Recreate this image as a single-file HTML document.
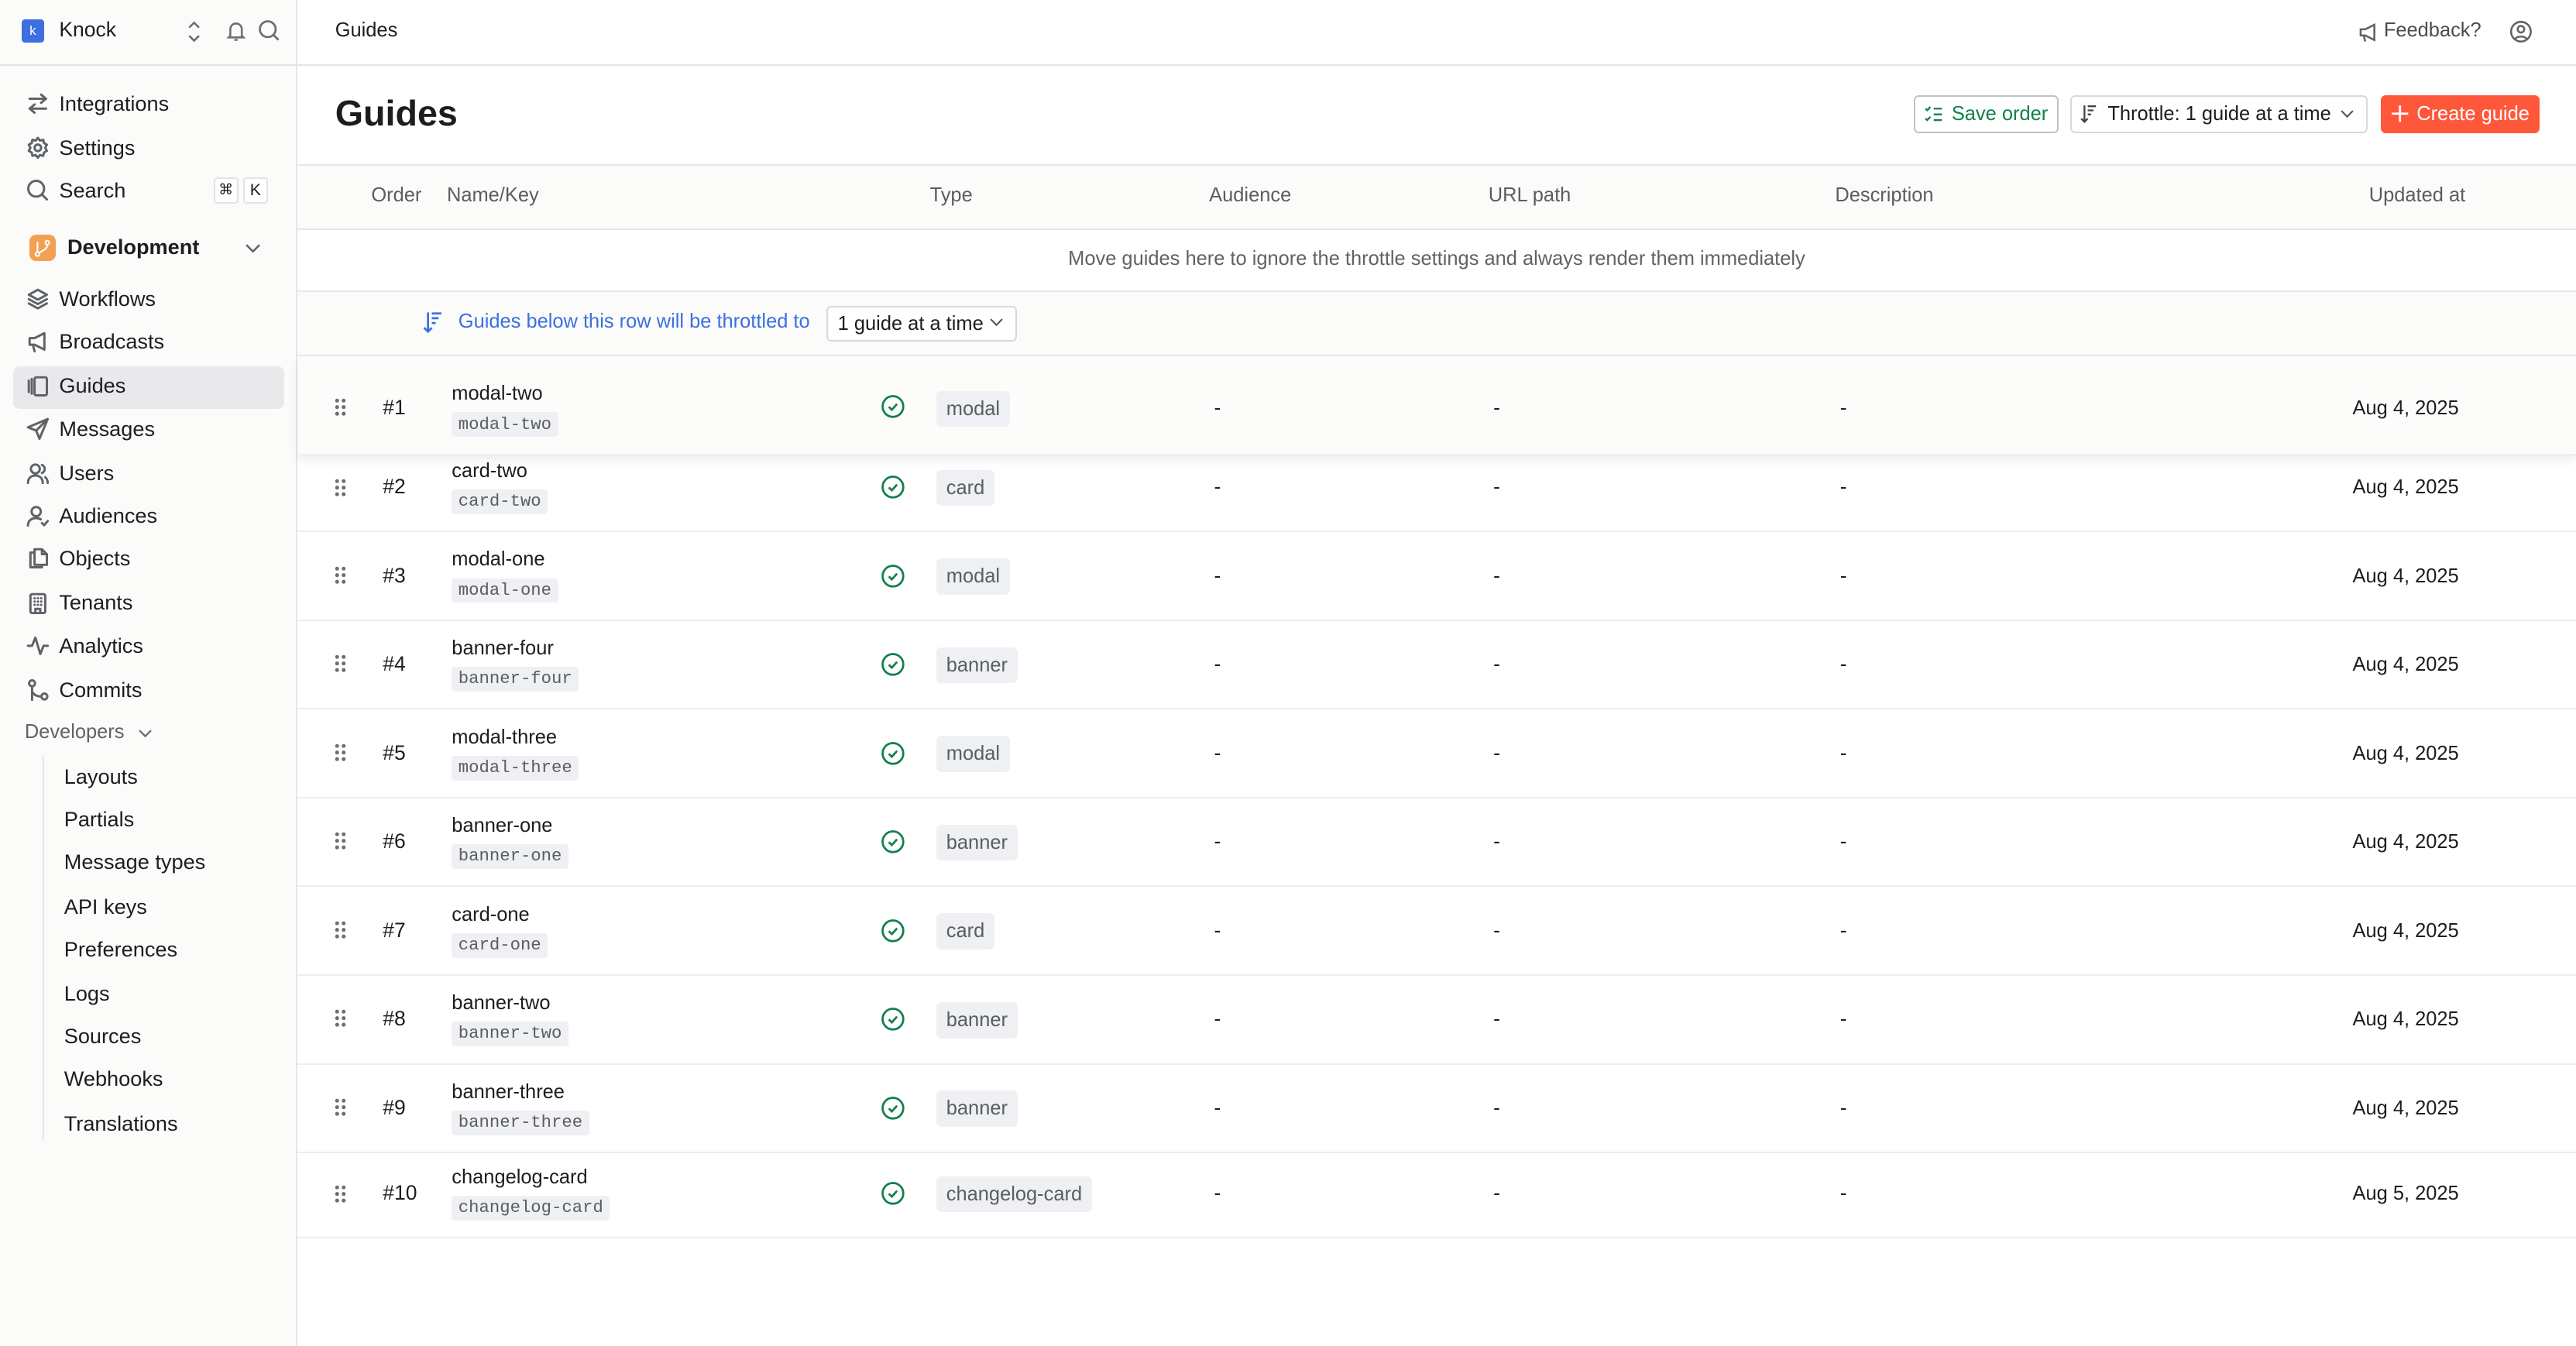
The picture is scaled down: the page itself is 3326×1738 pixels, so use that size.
<!DOCTYPE html>
<html><head><meta charset="utf-8">
<style>
*{box-sizing:border-box;margin:0;padding:0}
html,body{width:3326px;height:1738px;overflow:hidden;background:#fff}
#app{zoom:2.12117;width:1568px;height:819.4px;position:relative;font-family:"Liberation Sans",sans-serif;color:#1c1d20;font-size:12.5px}
.abs{position:absolute}
#side{left:0;top:0;width:181px;height:100%;background:#fbfbfa;border-right:1px solid #e6e6e8}
#top{left:0;top:0;width:1568px;height:40px;border-bottom:1px solid #e4e4e6}
.ni{position:absolute;left:16px;height:20px;display:flex;align-items:center;font-size:12.8px;color:#1c1d20}
.ni svg{width:14px;height:14px;margin-right:6px;stroke:#5f6368;fill:none;stroke-width:1.4;stroke-linecap:round;stroke-linejoin:round}
.sub{position:absolute;left:39px;font-size:12.8px;height:20px;line-height:20px}
.hdr{font-size:12px;color:#5a5d63;position:absolute;top:112px}
.row{position:absolute;left:181px;width:1387px;border-bottom:1px solid #eeeef1}
.row>*{position:absolute}
.dots{left:22px;width:8px;height:12px}
.num{left:52px;font-size:12.5px}
.nm{left:94px;font-size:12px}
.code{left:94px;font-family:"Liberation Mono",monospace;font-size:10.5px;background:#eff0f3;color:#5a5d63;padding:1px 4px;border-radius:2px;height:15px;line-height:13px}
.chk{left:355px;width:15px;height:15px}
.badge{left:389px;background:#eff0f3;color:#5a5d63;border-radius:3px;height:22px;line-height:22px;padding:0 6px;font-size:12px}
.dash{font-size:12.5px}
.dt{left:1251px;font-size:12px}
</style></head><body><div id="app">
<div id="side" class="abs">
  <div class="abs" style="left:13px;top:12px;width:14px;height:14px;background:#3e6fe0;border-radius:2px;color:#fff;font-size:8px;text-align:center;line-height:14px">k</div>
  <div class="abs" style="left:36px;top:11px;font-size:12.5px;font-weight:500">Knock</div>
  <svg class="abs" style="left:113px;top:12px" width="10" height="15" viewBox="0 0 10 15" fill="none" stroke="#6b6e74" stroke-width="1.2"><path d="M2 5l3-3 3 3M2 10l3 3 3-3"/></svg>
  <svg class="abs" style="left:137px;top:12px" width="13" height="14" viewBox="0 0 13 14" fill="none" stroke="#6b6e74" stroke-width="1.2"><path d="M3 10V6a3.5 3.5 0 017 0v4l1 1H2zM5.5 12.5h2"/></svg>
  <svg class="abs" style="left:157px;top:12px" width="14" height="14" viewBox="0 0 14 14" fill="none" stroke="#6b6e74" stroke-width="1.3"><circle cx="6" cy="6" r="4.8"/><path d="M9.5 9.5l3 3"/></svg>
  <div class="ni" style="top:53px"><svg viewBox="0 0 14 14"><path d="M2 4h10M9 1.5L12 4 9 6.5M12 10H2M5 7.5L2 10l3 2.5"/></svg>Integrations</div>
  <div class="ni" style="top:80px"><svg viewBox="0 0 14 14"><circle cx="7" cy="7" r="2"/><path d="M7 1l1.3 1.6 2-.5.4 2 1.8 1L11.5 7l1 1.9-1.8 1-.4 2-2-.5L7 13l-1.3-1.6-2 .5-.4-2-1.8-1L2.5 7l-1-1.9 1.8-1 .4-2 2 .5z"/></svg>Settings</div>
  <div class="ni" style="top:106px"><svg viewBox="0 0 14 14"><circle cx="6" cy="6" r="4.8"/><path d="M9.5 9.5l3 3"/></svg>Search</div>
  <div class="abs" style="left:130px;top:108px;width:15px;height:16px;border:1px solid #e3e3e5;border-radius:2px;background:#fff;font-size:9px;text-align:center;line-height:14px">⌘</div>
  <div class="abs" style="left:148px;top:108px;width:15px;height:16px;border:1px solid #e3e3e5;border-radius:2px;background:#fff;font-size:10px;text-align:center;line-height:14px">K</div>
  <div class="abs" style="left:18px;top:143px;width:16px;height:16px;background:#f2a152;border-radius:4px"></div>
  <svg class="abs" style="left:20px;top:145px" width="12" height="12" viewBox="0 0 12 12" fill="none" stroke="#fff" stroke-width="1"><circle cx="3" cy="9.5" r="1.2"/><circle cx="9" cy="2.5" r="1.2"/><path d="M3 2v6.3M9 3.7c0 3-3 3.5-5 5"/></svg>
  <div class="abs" style="left:41px;top:143px;font-size:12.8px;font-weight:600">Development</div>
  <svg class="abs" style="left:149px;top:147px" width="10" height="8" viewBox="0 0 10 8" fill="none" stroke="#5f6368" stroke-width="1.2"><path d="M1 2l4 4 4-4"/></svg>
  <div class="ni" style="top:172px"><svg viewBox="0 0 14 14"><path d="M7 1.5l5.5 3L7 7.5l-5.5-3zM1.5 7.2L7 10.2l5.5-3M1.5 9.8L7 12.8l5.5-3"/></svg>Workflows</div>
  <div class="ni" style="top:198px"><svg viewBox="0 0 14 14"><path d="M2 5h3l6-3v10L5 9H2zM4 9l1 4"/></svg>Broadcasts</div>
  <div class="abs" style="left:8px;top:223px;width:165px;height:26px;background:#e9e9eb;border-radius:4px"></div>
  <div class="ni" style="top:225px"><svg viewBox="0 0 14 14"><rect x="5" y="1.5" width="7.5" height="11" rx="1"/><path d="M1.5 3.5v7M3.3 2.5v9"/></svg>Guides</div>
  <div class="ni" style="top:251px"><svg viewBox="0 0 14 14"><path d="M13 1L1 6l5 2 2 5zM6 8l7-7"/></svg>Messages</div>
  <div class="ni" style="top:278px"><svg viewBox="0 0 14 14"><circle cx="5.5" cy="4.5" r="2.7"/><path d="M1 13c0-3 2-4.5 4.5-4.5S10 10 10 13M9.5 2a2.7 2.7 0 010 5M11.5 9.5c1 .8 1.5 2 1.5 3.5"/></svg>Users</div>
  <div class="ni" style="top:304px"><svg viewBox="0 0 14 14"><circle cx="6" cy="4.5" r="2.8"/><path d="M1 13c0-3 2.2-4.5 5-4.5 1 0 2 .2 2.8.7M9.5 11.5l1.3 1.3 2.2-2.5"/></svg>Audiences</div>
  <div class="ni" style="top:330px"><svg viewBox="0 0 14 14"><path d="M5 3.5H2.5v9h7V11M5 1.5h4.5l3 3V11H5zM9.5 1.5v3h3"/></svg>Objects</div>
  <div class="ni" style="top:357px"><svg viewBox="0 0 14 14"><rect x="2.5" y="1.5" width="9" height="11.5" rx="1"/><path d="M5 4h.1M7 4h.1M9 4h.1M5 6h.1M7 6h.1M9 6h.1M5 8h.1M7 8h.1M9 8h.1M5.5 13v-2.5h3V13"/></svg>Tenants</div>
  <div class="ni" style="top:383px"><svg viewBox="0 0 14 14"><path d="M1 7h2.5l2-5 3 10 2-5H13"/></svg>Analytics</div>
  <div class="ni" style="top:410px"><svg viewBox="0 0 14 14"><circle cx="3.5" cy="3" r="1.8"/><circle cx="11" cy="11" r="1.8"/><path d="M3.5 5v8M3.5 8c1 2 3 3 5.7 3"/></svg>Commits</div>
  <div class="abs" style="left:15px;top:439px;font-size:12px;color:#5f6368">Developers</div>
  <svg class="abs" style="left:84px;top:443px" width="9" height="7" viewBox="0 0 9 7" fill="none" stroke="#6b6e74" stroke-width="1.1"><path d="M1 1.5l3.5 3.5 3.5-3.5"/></svg>
  <div class="abs" style="left:26px;top:460px;width:1px;height:234px;background:#e4e4e6"></div>
  <div class="sub" style="top:463px">Layouts</div>
  <div class="sub" style="top:489px">Partials</div>
  <div class="sub" style="top:515px">Message types</div>
  <div class="sub" style="top:542px">API keys</div>
  <div class="sub" style="top:568px">Preferences</div>
  <div class="sub" style="top:595px">Logs</div>
  <div class="sub" style="top:621px">Sources</div>
  <div class="sub" style="top:647px">Webhooks</div>
  <div class="sub" style="top:674px">Translations</div>
</div>
<div id="top" class="abs" style="left:181px;width:1387px"></div>
<div class="abs" style="left:0;top:39px;width:181px;height:1px;background:#e4e4e6"></div>
<div class="abs" style="left:204px;top:12px;font-size:12px">Guides</div>
<svg class="abs" style="left:1435px;top:13px" width="13" height="13" viewBox="0 0 14 14" fill="none" stroke="#5f6368" stroke-width="1.3"><path d="M2 5h3l6-3v10L5 9H2zM4 9l1 4"/></svg>
<div class="abs" style="left:1451px;top:12px;font-size:12px;color:#4a4d52">Feedback?</div>
<svg class="abs" style="left:1527px;top:12px" width="15" height="15" viewBox="0 0 15 15" fill="none" stroke="#5f6368" stroke-width="1.2"><circle cx="7.5" cy="7.5" r="6"/><circle cx="7.5" cy="6" r="2"/><path d="M4 12c1-2 6-2 7 0"/></svg>

<div class="abs" style="left:204px;top:56px;font-size:22px;font-weight:700;color:#1c1d20">Guides</div>
<div class="abs" style="left:1165px;top:58px;width:88px;height:23px;border:1px solid #b8c6c3;border-radius:3px;font-size:12px;color:#13804b;line-height:21px;padding-left:22px">Save order</div>
<svg class="abs" style="left:1171px;top:64px" width="12" height="11" viewBox="0 0 12 11" fill="none" stroke="#13804b" stroke-width="1.1"><path d="M1 2l1 1 2-2M1 8l1 1 2-2M6 2h5M6 5.5h5M6 9h5"/></svg>
<div class="abs" style="left:1260px;top:58px;width:181px;height:23px;border:1px solid #d9d9dc;border-radius:3px;font-size:12px;line-height:21px;padding-left:22px">Throttle: 1 guide at a time</div>
<svg class="abs" style="left:1266px;top:63px" width="11" height="12" viewBox="0 0 11 12" fill="none" stroke="#444" stroke-width="1.1"><path d="M3 1v10M1 9l2 2 2-2M5 1.5h5M5 4h3.5M5 6.5h2"/></svg>
<svg class="abs" style="left:1424px;top:66px" width="9" height="7" viewBox="0 0 9 7" fill="none" stroke="#555" stroke-width="1"><path d="M1 1.5l3.5 3.5 3.5-3.5"/></svg>
<div class="abs" style="left:1449px;top:58px;width:97px;height:23px;background:#ff573a;border-radius:3px;font-size:12px;color:#fff;line-height:23px;padding-left:22px">Create guide</div>
<svg class="abs" style="left:1455px;top:63px" width="12" height="12" viewBox="0 0 12 12" fill="none" stroke="#fff" stroke-width="1.3"><path d="M6 1v10M1 6h10"/></svg>

<div class="abs" style="left:181px;top:100px;width:1387px;height:40px;background:#fbfbfa;border-top:1px solid #e8e8ea;border-bottom:1px solid #e8e8ea"></div>
<div class="hdr" style="left:226px">Order</div>
<div class="hdr" style="left:272px">Name/Key</div>
<div class="hdr" style="left:566px">Type</div>
<div class="hdr" style="left:736px">Audience</div>
<div class="hdr" style="left:906px">URL path</div>
<div class="hdr" style="left:1117px">Description</div>
<div class="hdr" style="left:1442px">Updated at</div>
<div class="abs" style="left:181px;top:151px;width:1387px;text-align:center;font-size:12px;color:#5f6368">Move guides here to ignore the throttle settings and always render them immediately</div>
<div class="abs" style="left:181px;top:177px;width:1387px;height:40px;background:#fbfbfa;border-top:1px solid #e8e8ea;border-bottom:1px solid #e8e8ea"></div>
<svg class="abs" style="left:257px;top:189px" width="13" height="14" viewBox="0 0 11 12" fill="none" stroke="#3b6fe0" stroke-width="1.1"><path d="M3 1v10M1 9l2 2 2-2M5 1.5h5M5 4h3.5M5 6.5h2"/></svg>
<div class="abs" style="left:279px;top:189px;font-size:12px;color:#3b6fe0">Guides below this row will be throttled to</div>
<div class="abs" style="left:503px;top:186px;width:116px;height:22px;border:1px solid #d9d9dc;border-radius:3px;background:#fff;font-size:12px;line-height:20px;padding-left:6px">1 guide at a time</div>
<svg class="abs" style="left:602px;top:193px" width="9" height="7" viewBox="0 0 9 7" fill="none" stroke="#555" stroke-width="1"><path d="M1 1.5l3.5 3.5 3.5-3.5"/></svg>

<div id="rows"></div>
<svg width="0" height="0" style="position:absolute"><defs>
<g id="dd" fill="#6b6e74"><circle cx="2" cy="2" r="1.2"/><circle cx="6" cy="2" r="1.2"/><circle cx="2" cy="6" r="1.2"/><circle cx="6" cy="6" r="1.2"/><circle cx="2" cy="10" r="1.2"/><circle cx="6" cy="10" r="1.2"/></g>
<g id="ck" fill="none" stroke="#13804b" stroke-width="1.3"><circle cx="7.5" cy="7.5" r="6.3"/><path d="M5 7.7l1.8 1.8L10 6"/></g>
</defs></svg>
<div class="row" style="top:217px;height:60px;background:#fcfcfb;box-shadow:0 3px 5px rgba(0,0,0,.07);z-index:2">
<svg class="dots" style="top:25px" viewBox="0 0 8 12"><use href="#dd"/></svg><div class="num" style="top:24px">#1</div><div class="nm" style="top:16px">modal-two</div><div class="code" style="top:34px">modal-two</div><svg class="chk" style="top:23px" viewBox="0 0 15 15"><use href="#ck"/></svg><div class="badge" style="top:21px">modal</div><div class="dash" style="left:558px;top:24px">-</div><div class="dash" style="left:728px;top:24px">-</div><div class="dash" style="left:939px;top:24px">-</div><div class="dt" style="top:25px">Aug 4, 2025</div></div>
<div class="row" style="top:277px;height:47px">
<svg class="dots" style="top:14px" viewBox="0 0 8 12"><use href="#dd"/></svg><div class="num" style="top:12px">#2</div><div class="nm" style="top:3px">card-two</div><div class="code" style="top:21px">card-two</div><svg class="chk" style="top:12px" viewBox="0 0 15 15"><use href="#ck"/></svg><div class="badge" style="top:9px">card</div><div class="dash" style="left:558px;top:12px">-</div><div class="dash" style="left:728px;top:12px">-</div><div class="dash" style="left:939px;top:12px">-</div><div class="dt" style="top:13px">Aug 4, 2025</div></div>
<div class="row" style="top:324px;height:54px">
<svg class="dots" style="top:20px" viewBox="0 0 8 12"><use href="#dd"/></svg><div class="num" style="top:19px">#3</div><div class="nm" style="top:10px">modal-one</div><div class="code" style="top:28px">modal-one</div><svg class="chk" style="top:19px" viewBox="0 0 15 15"><use href="#ck"/></svg><div class="badge" style="top:16px">modal</div><div class="dash" style="left:558px;top:19px">-</div><div class="dash" style="left:728px;top:19px">-</div><div class="dash" style="left:939px;top:19px">-</div><div class="dt" style="top:20px">Aug 4, 2025</div></div>
<div class="row" style="top:378px;height:54px">
<svg class="dots" style="top:20px" viewBox="0 0 8 12"><use href="#dd"/></svg><div class="num" style="top:19px">#4</div><div class="nm" style="top:10px">banner-four</div><div class="code" style="top:28px">banner-four</div><svg class="chk" style="top:19px" viewBox="0 0 15 15"><use href="#ck"/></svg><div class="badge" style="top:16px">banner</div><div class="dash" style="left:558px;top:19px">-</div><div class="dash" style="left:728px;top:19px">-</div><div class="dash" style="left:939px;top:19px">-</div><div class="dt" style="top:20px">Aug 4, 2025</div></div>
<div class="row" style="top:432px;height:54px">
<svg class="dots" style="top:20px" viewBox="0 0 8 12"><use href="#dd"/></svg><div class="num" style="top:19px">#5</div><div class="nm" style="top:10px">modal-three</div><div class="code" style="top:28px">modal-three</div><svg class="chk" style="top:19px" viewBox="0 0 15 15"><use href="#ck"/></svg><div class="badge" style="top:16px">modal</div><div class="dash" style="left:558px;top:19px">-</div><div class="dash" style="left:728px;top:19px">-</div><div class="dash" style="left:939px;top:19px">-</div><div class="dt" style="top:20px">Aug 4, 2025</div></div>
<div class="row" style="top:486px;height:54px">
<svg class="dots" style="top:20px" viewBox="0 0 8 12"><use href="#dd"/></svg><div class="num" style="top:19px">#6</div><div class="nm" style="top:10px">banner-one</div><div class="code" style="top:28px">banner-one</div><svg class="chk" style="top:19px" viewBox="0 0 15 15"><use href="#ck"/></svg><div class="badge" style="top:16px">banner</div><div class="dash" style="left:558px;top:19px">-</div><div class="dash" style="left:728px;top:19px">-</div><div class="dash" style="left:939px;top:19px">-</div><div class="dt" style="top:20px">Aug 4, 2025</div></div>
<div class="row" style="top:540px;height:54px">
<svg class="dots" style="top:20px" viewBox="0 0 8 12"><use href="#dd"/></svg><div class="num" style="top:19px">#7</div><div class="nm" style="top:10px">card-one</div><div class="code" style="top:28px">card-one</div><svg class="chk" style="top:19px" viewBox="0 0 15 15"><use href="#ck"/></svg><div class="badge" style="top:16px">card</div><div class="dash" style="left:558px;top:19px">-</div><div class="dash" style="left:728px;top:19px">-</div><div class="dash" style="left:939px;top:19px">-</div><div class="dt" style="top:20px">Aug 4, 2025</div></div>
<div class="row" style="top:594px;height:54px">
<svg class="dots" style="top:20px" viewBox="0 0 8 12"><use href="#dd"/></svg><div class="num" style="top:19px">#8</div><div class="nm" style="top:10px">banner-two</div><div class="code" style="top:28px">banner-two</div><svg class="chk" style="top:19px" viewBox="0 0 15 15"><use href="#ck"/></svg><div class="badge" style="top:16px">banner</div><div class="dash" style="left:558px;top:19px">-</div><div class="dash" style="left:728px;top:19px">-</div><div class="dash" style="left:939px;top:19px">-</div><div class="dt" style="top:20px">Aug 4, 2025</div></div>
<div class="row" style="top:648px;height:54px">
<svg class="dots" style="top:20px" viewBox="0 0 8 12"><use href="#dd"/></svg><div class="num" style="top:19px">#9</div><div class="nm" style="top:10px">banner-three</div><div class="code" style="top:28px">banner-three</div><svg class="chk" style="top:19px" viewBox="0 0 15 15"><use href="#ck"/></svg><div class="badge" style="top:16px">banner</div><div class="dash" style="left:558px;top:19px">-</div><div class="dash" style="left:728px;top:19px">-</div><div class="dash" style="left:939px;top:19px">-</div><div class="dt" style="top:20px">Aug 4, 2025</div></div>
<div class="row" style="top:702px;height:52px">
<svg class="dots" style="top:19px" viewBox="0 0 8 12"><use href="#dd"/></svg><div class="num" style="top:17px">#10</div><div class="nm" style="top:8px">changelog-card</div><div class="code" style="top:26px">changelog-card</div><svg class="chk" style="top:17px" viewBox="0 0 15 15"><use href="#ck"/></svg><div class="badge" style="top:14px">changelog-card</div><div class="dash" style="left:558px;top:17px">-</div><div class="dash" style="left:728px;top:17px">-</div><div class="dash" style="left:939px;top:17px">-</div><div class="dt" style="top:18px">Aug 5, 2025</div></div>
</div></body></html>
